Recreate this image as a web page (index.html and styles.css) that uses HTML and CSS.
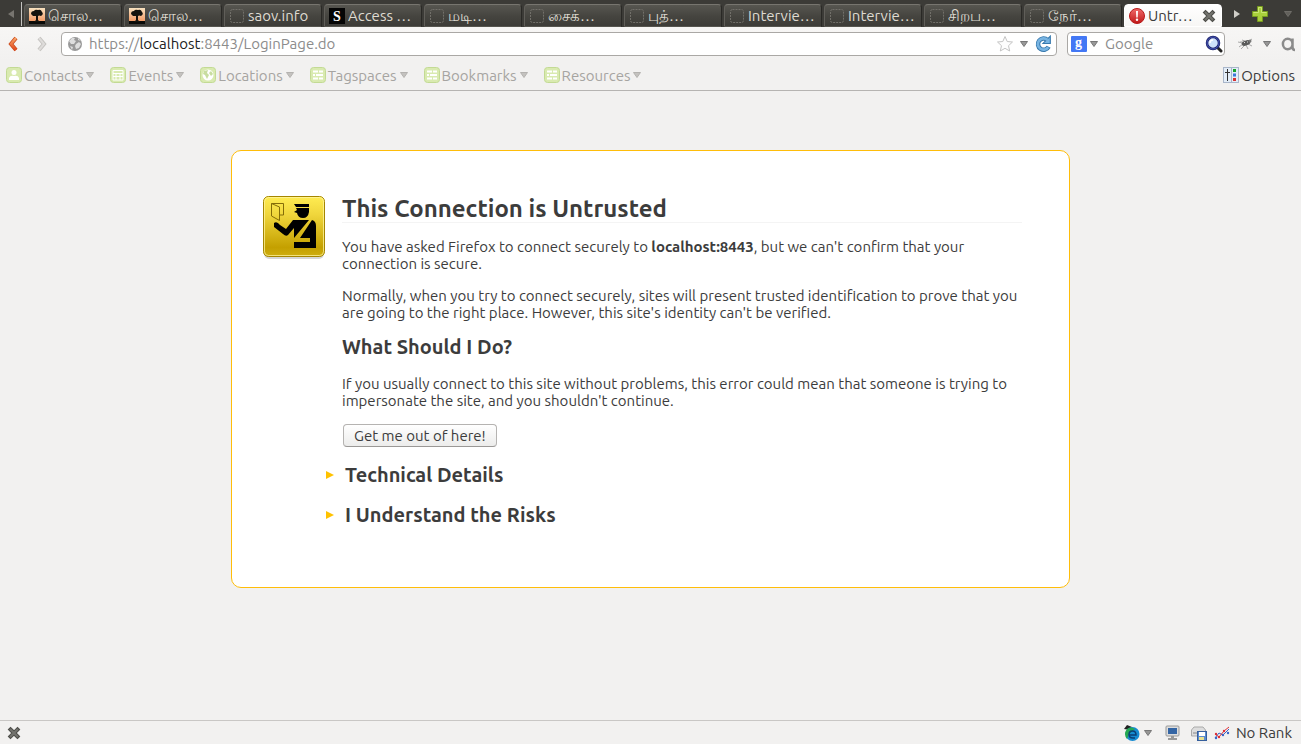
FILE: index.html
```html
<!DOCTYPE html>
<html lang="en">
<head>
<meta charset="utf-8">
<title>Untrusted Connection</title>
<link rel="stylesheet" href="styles.css">
</head>
<body>
<svg class="defs" width="0" height="0" aria-hidden="true">
  <defs>
    <linearGradient id="sunset" x1="0" y1="0" x2="0" y2="1"><stop offset="0" stop-color="#f8e2c0"/><stop offset=".8" stop-color="#f29c68"/></linearGradient>
    <linearGradient id="gold" x1="0" y1="0" x2="0" y2="1"><stop offset="0" stop-color="#ffec52"/><stop offset=".3" stop-color="#f0d63c"/><stop offset=".85" stop-color="#c4a000"/><stop offset="1" stop-color="#cfae10"/></linearGradient>
    <linearGradient id="red" x1="0" y1="0" x2="0" y2="1"><stop offset="0" stop-color="#f06a6a"/><stop offset="1" stop-color="#c01818"/></linearGradient>
    <linearGradient id="orange" x1="0" y1="0" x2="0" y2="1"><stop offset="0" stop-color="#f8a468"/><stop offset="1" stop-color="#e2481c"/></linearGradient>
    <symbol id="tree" viewBox="0 0 16 16"><rect width="16" height="16" fill="url(#sunset)"/><rect y="13" width="16" height="3" fill="#0a0a08"/><path d="M2 6Q2 3 5 3Q6 1 9 2Q12 1 13 4Q15 6 12 8Q10 7 9 8V12L11 14H5L7 12V8L4 8Z" fill="#15130e"/></symbol>
    <symbol id="blank" viewBox="0 0 16 16"><rect x="1.500" y="1.500" width="13" height="13" rx="2" fill="none" stroke="#72706a" stroke-dasharray="2 1"/></symbol>
    <symbol id="green" viewBox="0 0 16 16"><rect x=".5" y=".5" width="15" height="15" rx="3" fill="#d9eab0" stroke="#c3da94"/></symbol>
    <symbol id="list" viewBox="0 0 16 16"><use href="#green"/><path d="M3 4.500H8M9 4.500H13M3 8H5M6 8H13M3 11.500H8M9 11.500H13" stroke="#fff" stroke-width="2"/></symbol>
    <symbol id="cross" viewBox="0 0 14 14"><path d="M3.500 3.500L10.500 10.500M10.500 3.500L3.500 10.500" stroke="#4e4e4a" stroke-width="4" stroke-linecap="square"/><path d="M3 3L11 11M11 3L3 11" stroke="#73736e" stroke-width="2"/></symbol>
    <symbol id="down" viewBox="0 0 8 6"><path d="M.5 .5H7.500L4 5.500Z" fill="currentColor" fill-opacity=".75" stroke="currentColor"/></symbol>
  </defs>
</svg>

<div class="browser">
  <header>
    <div class="tabstrip">
      <button class="scroll left" aria-label="Scroll tabs left"><svg width="6" height="8"><path d="M6 0V8L0 4Z" fill="#777570"/></svg></button>
      <nav class="tabs" aria-label="Tabs">
        <button class="tab"><svg><use href="#tree"/></svg><span>சொல…</span></button>
        <button class="tab"><svg><use href="#tree"/></svg><span>சொல…</span></button>
        <button class="tab"><svg><use href="#blank"/></svg><span>saov.info</span></button>
        <button class="tab"><svg viewBox="0 0 16 16"><rect width="16" height="16" fill="#050505"/><text class="letter" x="4" y="13" fill="#fff">S</text></svg><span>Access …</span></button>
        <button class="tab"><svg><use href="#blank"/></svg><span>மடி…</span></button>
        <button class="tab"><svg><use href="#blank"/></svg><span>சைக்…</span></button>
        <button class="tab"><svg><use href="#blank"/></svg><span>புத்…</span></button>
        <button class="tab"><svg><use href="#blank"/></svg><span>Intervie…</span></button>
        <button class="tab"><svg><use href="#blank"/></svg><span>Intervie…</span></button>
        <button class="tab"><svg><use href="#blank"/></svg><span>சிறப…</span></button>
        <button class="tab"><svg><use href="#blank"/></svg><span>நேர்…</span></button>
        <button class="tab active"><svg viewBox="0 0 16 16"><circle cx="8" cy="8" r="7.500" fill="url(#red)" stroke="#b81a1a"/><path d="M7 3H9L8.700 9.500H7.300Z" fill="#fff"/><circle cx="8" cy="11.700" r="1.200" fill="#fff"/></svg><span>Untr…</span><svg class="close"><use href="#cross"/></svg></button>
      </nav>
      <button class="scroll right" aria-label="Scroll tabs right"><svg width="6" height="8"><path d="M0 0V8L6 4Z" fill="#d0cec8"/></svg></button>
      <button class="newtab" aria-label="New tab"><svg width="16" height="16" viewBox="0 0 16 16"><path d="M5.500 .5H10.500V5.500H15.500V10.500H10.500V15.500H5.500V10.500H.5V5.500H5.500Z" fill="#a9cf3c" stroke="#779b1e"/><path d="M1.500 6.500H6.500V1.500H9.500V6.500H14.500" fill="none" stroke="#cbe576"/></svg></button>
      <button class="alltabs" aria-label="List all tabs"><svg width="8" height="6"><use href="#down"/></svg></button>
    </div>

    <div class="toolbar">
      <button class="back" aria-label="Back"><svg width="10" height="16" viewBox="0 0 10 16"><path d="M8 2L3 8L8 14" fill="none" stroke="#c9481b" stroke-width="4"/><path d="M8 2L3 8L8 14" fill="none" stroke="url(#orange)" stroke-width="2.500"/></svg></button>
      <button class="forward" aria-label="Forward" disabled><svg width="10" height="16" viewBox="0 0 10 16"><path d="M2 2L7 8L2 14" fill="none" stroke="#c5c3c0" stroke-width="4"/><path d="M2 2L7 8L2 14" fill="none" stroke="#dedcda" stroke-width="2"/></svg></button>
      <div class="field url">
        <svg width="16" height="16" viewBox="0 0 16 16"><circle cx="8" cy="8" r="7" fill="#999"/><path d="M2 5L5 2L8 2L7 4L9 5L7 8L4 8ZM9 8L12 6L14 8L12 12L9 13L8 10ZM11 2L14 5L11 4ZM3 10L6 11L5 14Z" fill="#dedede"/></svg>
        <div class="address" role="textbox" aria-label="Address" contenteditable="plaintext-only">https://<b>localhost</b>:8443/LoginPage.do</div>
        <svg width="18" height="18" viewBox="0 0 18 18"><path d="M9 1.500L11.200 6.500L16.500 7L12.500 10.700L13.700 16L9 13.300L4.300 16L5.500 10.700L1.500 7L6.800 6.500Z" fill="#fdfdfd" stroke="#c4c4c4"/></svg>
        <svg class="arrow" width="8" height="6"><use href="#down"/></svg>
        <svg width="18" height="18" viewBox="0 0 16 16"><path d="M12 4.500A5 5 0 1 0 13 10.500" fill="none" stroke="#3779ae" stroke-width="4"/><path d="M14.500 1V7.500H8Z" fill="#78b4e2" stroke="#3779ae"/><path d="M12 4.500A5 5 0 1 0 12.600 10.800" fill="none" stroke="#78b4e2" stroke-width="2.400"/></svg>
      </div>
      <div class="field search">
        <svg width="16" height="16" viewBox="0 0 16 16"><rect width="16" height="16" rx="1" fill="#4378f5"/><text class="letter" x="4" y="11" fill="#fff">g</text></svg>
        <svg class="arrow" width="8" height="6"><use href="#down"/></svg>
        <input type="text" aria-label="Search" placeholder="Google">
        <svg width="18" height="18" viewBox="0 0 18 18"><path d="M13 13L16 16" stroke="#222" stroke-width="3" stroke-linecap="round"/><circle cx="8" cy="8" r="6" fill="#cfe2fb" stroke="#20246f" stroke-width="2.500"/><circle cx="8" cy="8" r="6" fill="none" stroke="#4a5fc0" stroke-width=".8"/><path d="M5 8Q5 5 8 5" fill="none" stroke="#fff" stroke-width="1.500"/></svg>
      </div>
      <button class="fly" aria-label="Firebug"><svg width="16" height="14" viewBox="0 0 16 14"><path d="M1 5L6 6M2 10L6 7M4 12L8 8M9 8L11 12M11 7L15 9M12 4L15 2M8 4L5 3" stroke="#aaa" fill="none"/><path d="M3 4L9 5L6 9Z" fill="#bbb"/><ellipse cx="9" cy="6" rx="4.500" ry="2.500" transform="rotate(-20 9 6)" fill="#5b5b5b"/><circle cx="13" cy="4" r="1.500" fill="#777"/><path d="M7 6L8 5M10 5L11 5" stroke="#ddd"/></svg></button>
      <svg class="arrow flyarrow" width="8" height="6"><use href="#down"/></svg>
      <button class="alexa" aria-label="Alexa"><svg width="14" height="16" viewBox="0 0 14 16"><path d="M11.500 2.500V11Q11.500 14 14 14M11.500 8A4.800 5.300 0 1 0 6.700 13.300Q10.500 13 11.500 9" fill="none" stroke="#8b8b8b" stroke-width="2.500"/></svg></button>
    </div>

    <div class="bookmarks">
      <button><svg class="fav" viewBox="0 0 16 16"><use href="#green"/><circle cx="8" cy="5.500" r="2.500" fill="#fff"/><path d="M3 13V11Q4 8 8 9Q12 8 13 11V13Z" fill="#fff"/></svg>Contacts<svg class="arrow"><use href="#down"/></svg></button>
      <button><svg class="fav" viewBox="0 0 16 16"><use href="#green"/><path d="M3 3.500H13V13H3ZM3 6.500H13M3 9.500H13M6 6V13M10 6V13" fill="none" stroke="#fff"/></svg>Events<svg class="arrow"><use href="#down"/></svg></button>
      <button><svg class="fav" viewBox="0 0 16 16"><use href="#green"/><circle cx="8" cy="8" r="5.500" fill="#fff"/><path d="M4 4L8 3L7 6L9 8L7 12L5 8L3 7ZM11 4L13 7L11 9L9 6Z" fill="#c8dda0"/></svg>Locations<svg class="arrow"><use href="#down"/></svg></button>
      <button><svg class="fav"><use href="#list"/></svg>Tagspaces<svg class="arrow"><use href="#down"/></svg></button>
      <button><svg class="fav"><use href="#list"/></svg>Bookmarks<svg class="arrow"><use href="#down"/></svg></button>
      <button><svg class="fav"><use href="#list"/></svg>Resources<svg class="arrow"><use href="#down"/></svg></button>
      <button class="options"><svg class="fav" viewBox="0 0 16 16"><rect x=".5" y=".5" width="15" height="15" fill="#e3edf8" stroke="#a9b6ca"/><path d="M4.500 2V14M2 5.500H7" stroke="#333"/><path d="M8.500 1V15" stroke="#a9b6ca"/><rect x="10" y="2" width="3" height="3" fill="#17a32a"/><rect x="10" y="6.500" width="3" height="3" fill="#3c78d8"/><rect x="10" y="11" width="3" height="3" fill="#d83030"/></svg>Options</button>
    </div>
  </header>

  <main>
    <section class="card">
      <svg class="officer" width="64" height="66" viewBox="0 0 64 66">
        <rect x="2" y="3" width="60" height="61" rx="5" fill="#bbb" opacity=".6"/>
        <rect x="1.500" y="1.500" width="61" height="60" rx="5" fill="url(#gold)" stroke="#a58600"/>
        <rect x="2.500" y="2.500" width="59" height="58" rx="4" fill="none" stroke="#fff6a0" opacity=".75"/>
        <path d="M9.500 8.500H21.500V20H18M9.500 8.500V21L17.500 25.500V12L9.500 8.500" fill="none" stroke="#846d08"/>
        <path d="M32 9H47V12H34ZM34 13H47V17Q46 23 41 23Q36 23 35 18L32 17L35 15Z" fill="#000"/>
        <path d="M12 28Q15 26 18 30L24 34L31 25H47L32 43V33L26 40Q24 42 21 39L12 32Z" fill="#000"/>
        <path d="M50 25Q54 26 54 31V53H32V47H48V43H38Z" fill="#000"/>
      </svg>
      <div class="content">
        <h1>This Connection is Untrusted</h1>
        <p>You have asked Firefox to connect securely to <b>localhost:8443</b>, but we can't confirm that your<br>connection is secure.</p>
        <p>Normally, when you try to connect securely, sites will present trusted identification to prove that you<br>are going to the right place. However, this site's identity can't be verified.</p>
        <h2>What Should I Do?</h2>
        <p>If you usually connect to this site without problems, this error could mean that someone is trying to<br>impersonate the site, and you shouldn't continue.</p>
        <button class="leave">Get me out of here!</button>
        <h2 class="more"><button><svg width="8" height="8"><path d="M0 0L8 4L0 8Z" fill="#ffc200"/></svg>Technical Details</button></h2>
        <h2 class="more"><button><svg width="8" height="8"><path d="M0 0L8 4L0 8Z" fill="#ffc200"/></svg>I Understand the Risks</button></h2>
      </div>
    </section>
  </main>

  <footer>
    <button class="closebar" aria-label="Close add-on bar"><svg width="14" height="14"><use href="#cross"/></svg></button>
    <svg width="17" height="16" viewBox="0 0 17 16"><path d="M1 4L4 0L9 2L7 5Z" fill="#222"/><circle cx="9.500" cy="9" r="7" fill="#168bd2"/><path d="M4 4Q8 1 12 4L6 9L4 14Q0 9 4 4Z" fill="#25a852"/><path d="M6 10H13Q13 6 9.500 6Q6 6 6 9.500Q6 13 10 13H12" fill="none" stroke="#0b3f75" stroke-width="1.500"/></svg>
    <svg class="arrow" width="8" height="6"><use href="#down"/></svg>
    <svg class="monitor" width="16" height="16" viewBox="0 0 16 16"><rect x="1" y="1" width="13" height="10" rx="1" fill="#ddd" stroke="#999"/><rect x="3" y="3" width="9" height="6" fill="#3465a4"/><path d="M6 11H9V13H12V15H3V13H6Z" fill="#999"/></svg>
    <svg class="disk" width="16" height="16" viewBox="0 0 16 16"><path d="M.5 5L3 2H12L14.500 5V11H.5Z" fill="#ddd" stroke="#aaa"/><path d="M2 8H6" stroke="#888"/><rect x="6.500" y="6.500" width="9" height="9" fill="#5c8cd0" stroke="#365f9c"/><rect x="8" y="7" width="6" height="4" fill="#fff"/><rect x="8" y="12" width="5" height="3" fill="#e8e090"/></svg>
    <svg class="rank" width="16" height="14" viewBox="0 0 16 14"><path d="M1 12L5 7L9 9L15 3" fill="none" stroke="#3864c8"/><path d="M1 8L5 11L10 5L15 1" fill="none" stroke="#df2f35"/><g fill="#df2f35"><circle cx="2" cy="8" r="1.200"/><circle cx="5" cy="11" r="1.200"/><circle cx="10" cy="5" r="1.200"/></g><g fill="#3864c8"><circle cx="2" cy="12" r="1.200"/><circle cx="9" cy="9" r="1.200"/><circle cx="14" cy="7" r="1.200"/></g></svg>
    <span>No Rank</span>
  </footer>
</div>
</body>
</html>
```
FILE: styles.css
```css
* { box-sizing: border-box; }
body {
  margin: 0;
  font: 15px/17px "Ubuntu", "Noto Sans", "Open Sans", sans-serif;
  color: #3c3c3c;
  background: #f2f1f0;
}
button { font: inherit; color: inherit; background: none; border: 0; padding: 0; text-align: left; }
svg { display: block; flex: none; }
.defs { position: absolute; }
.browser { min-height: 100vh; display: flex; flex-direction: column; }

.tabstrip {
  height: 27px;
  display: flex;
  align-items: center;
  background: #3c3b37;
}
.scroll.left { width: 22px; height: 24px; padding-left: 8px; border-right: 1px solid #c5c4c1; }
.tabs { flex: 1; min-width: 0; height: 100%; display: flex; gap: 2px; padding: 4px 0 0 2px; }
.tab {
  flex: 1 1 0;
  min-width: 0;
  display: flex;
  align-items: center;
  gap: 3px;
  padding: 0 4px;
  color: #dfdbd2;
  white-space: nowrap;
  background: linear-gradient(#575650, #45443f 55%, #3d3c38);
  border: 1px solid #6b6964;
  border-color: #77756f #292825 transparent #605e59;
  border-radius: 4px 4px 0 0;
}
.tab svg { width: 16px; height: 16px; }
.tab span { flex: 1; overflow: hidden; }
.tab.active { color: #3c3c3c; background: linear-gradient(#fff, #f7f6f5); border-color: #fff; }
.tab .close { width: 14px; height: 14px; margin-right: 1px; }
.letter { font: bold 14px "Liberation Serif", serif; }
.scroll.right { margin-left: 12px; }
.newtab { margin-left: 12px; }
.alltabs { margin: 0 9px 0 16px; color: #6f6d68; }

.toolbar {
  height: 33px;
  display: flex;
  align-items: center;
  padding: 0 6px 0 8px;
  background: linear-gradient(#f7f6f5, #f2f1f0);
}
.forward { margin: 0 14px 0 19px; }
.arrow { width: 8px; height: 6px; color: #777; }
.field {
  height: 24px;
  display: flex;
  align-items: center;
  background: #fff;
  border: 1px solid #aaa8a5;
  border-radius: 4px;
}
.url { flex: 1; padding: 0 4px 0 5px; gap: 6px; }
.address { flex: 1; color: #8c8c8c; outline: 0; }
.address b { font-weight: 400; color: #222; }
.search { width: 158px; margin-left: 10px; padding: 0 1px 0 3px; gap: 3px; }
.search input { flex: 1; min-width: 0; border: 0; padding: 0 0 0 4px; background: none; font: inherit; color: #333; }
.search input::placeholder { color: #8c8c8c; opacity: 1; }
.fly { margin-left: 12px; }
.flyarrow { margin: 0 10px 0 10px; }

.bookmarks {
  height: 31px;
  display: flex;
  align-items: center;
  gap: 16px;
  padding: 0 6px;
  color: #a6a4a1;
  border-bottom: 1px solid #b6b4b2;
}
.bookmarks button { display: flex; align-items: center; gap: 2px; }
.bookmarks .fav { width: 16px; height: 16px; }
.bookmarks .arrow { margin-left: 1px; color: #b4b2af; }
.bookmarks .options { margin-left: auto; color: #3c3c3c; }

main { flex: 1; padding: 59px 16px 0; }
.card {
  max-width: 839px;
  min-height: 438px;
  margin: 0 auto;
  padding: 44px 47px 40px 30px;
  display: flex;
  gap: 16px;
  background: #fff;
  border: 1px solid #ffbd09;
  border-radius: 10px;
}
.content { flex: 1; min-width: 0; }
h1 { margin: 0 0 15px; padding-top: 1px; font-size: 24px; line-height: 26px; border-bottom: 1px solid #f4f4f4; }
h2 { margin: 0; font-size: 20px; line-height: 22px; }
p { margin: 0 0 15px; }
p + h2 { margin: 15px 0 17px; }
.leave {
  display: block;
  height: 23px;
  margin: 0 0 17px 1px;
  padding: 0 10px;
  background: linear-gradient(#fff, #ececeb);
  border: 1px solid #b5b3b1;
  border-bottom-color: #9a9896;
  border-radius: 4px;
}
.more { margin: 0 0 18px -16px; }
.more button { display: flex; align-items: center; gap: 11px; }

footer {
  height: 24px;
  display: flex;
  align-items: center;
  padding: 0 9px 0 7px;
  border-top: 1px solid #c9c7c5;
}
.closebar { margin-right: auto; }
footer .arrow { margin: 0 13px 0 4px; }
.disk { margin: 0 7px 0 10px; }
.rank { margin-right: 6px; }
```
